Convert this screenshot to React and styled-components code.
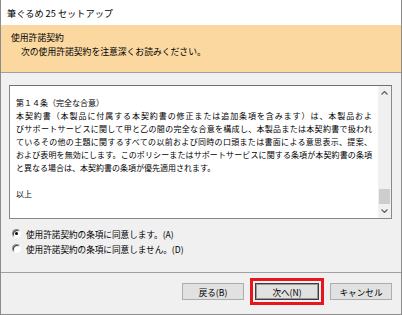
import React from 'react'
import styled, { createGlobalStyle } from 'styled-components'

const Global = createGlobalStyle`
  html, body { margin: 0; padding: 0; background: #fff; }
  body { font-family: "Noto Sans CJK JP", "Noto Sans", sans-serif; color: #000; }
`

const lines = [
  { text: '第１４条（完全な合意）' },
  { text: '本契約書（本製品に付属する本契約書の修正または追加条項を含みます）は、本製品およ', justify: true },
  { text: 'びサポートサービスに関して甲と乙の間の完全な合意を構成し、本製品または本契約書で扱われ', justify: true },
  { text: 'ているその他の主題に関するすべての以前および同時の口頭または書面による意思表示、提案、', justify: true },
  { text: 'および表明を無効にします。このポリシーまたはサポートサービスに関する条項が本契約書の条項', justify: true },
  { text: 'と異なる場合は、本契約書の条項が優先適用されます。' },
  { text: '' },
  { text: '以上' },
]

const App = () => {
  return (
    <Window>
      <Global />
      <TitleBar>筆ぐるめ 25 セットアップ</TitleBar>
      <Header>
        <HeaderTitle>使用許諾契約</HeaderTitle>
        <HeaderSub>次の使用許諾契約を注意深くお読みください。</HeaderSub>
      </Header>
      <Body>
        <TextBox>
          <Content>
            {lines.map((l, i) => (
              <Line key={i} $justify={l.justify}>{l.text || '\u00a0'}</Line>
            ))}
          </Content>
          <Scrollbar>
            <Arrow>
              <svg width="7" height="4" viewBox="0 0 7 4"><path d="M0.5 3.5 L3.5 0.5 L6.5 3.5" fill="none" stroke="#606060" strokeWidth="1.2" /></svg>
            </Arrow>
            <Track>
              <Thumb />
            </Track>
            <Arrow>
              <svg width="7" height="4" viewBox="0 0 7 4"><path d="M0.5 0.5 L3.5 3.5 L6.5 0.5" fill="none" stroke="#606060" strokeWidth="1.2" /></svg>
            </Arrow>
          </Scrollbar>
        </TextBox>
        <Options>
          <Option>
            <Radio $checked />
            使用許諾契約の条項に同意します。(A)
          </Option>
          <Option>
            <Radio />
            使用許諾契約の条項に同意しません。(D)
          </Option>
        </Options>
      </Body>
      <Footer>
        <Button>戻る(B)</Button>
        <Button $primary $marked>次へ(N)</Button>
        <Button>キャンセル</Button>
      </Footer>
    </Window>
  )
}

export default App

const Window = styled.div`
  width: 402px;
  height: 315px;
  box-sizing: border-box;
  border: 1px solid #8c8c8c;
  border-top: none;
  display: flex;
  flex-direction: column;
  background: #f0f0f0;
  overflow: hidden;
`

const TitleBar = styled.div`
  height: 25px;
  background: #fff;
  display: flex;
  align-items: center;
  padding-left: 6px;
  font-size: 9.2px;
`

const Header = styled.div`
  height: 48px;
  box-sizing: border-box;
  background: #fad8a0;
  border-bottom: 1px solid #a0a0a0;
  padding: 6px 0 0 10px;
  font-size: 8.8px;
  line-height: 14px;
`

const HeaderTitle = styled.div``

const HeaderSub = styled.div`
  padding-left: 10px;
`

const Body = styled.div`
  flex: 1;
  padding: 12px 9px 0 8px;
  border-bottom: 1px solid #a0a0a0;
`

const TextBox = styled.div`
  height: 134px;
  box-sizing: border-box;
  border: 1px solid #828790;
  border-top-color: #6f6f6f;
  background: #fff;
  display: flex;
`

const Content = styled.div`
  flex: 1;
  padding: 10px 0 0 6px;
  overflow: hidden;
  font-size: 8px;
  line-height: 13px;
`

const Line = styled.div`
  width: 356px;
  white-space: nowrap;
  text-align: left;
  text-align-last: ${p => (p.$justify ? 'justify' : 'left')};
`

const Scrollbar = styled.div`
  width: 13px;
  background: #f0f0f0;
  display: flex;
  flex-direction: column;
`

const Arrow = styled.div`
  height: 14px;
  display: flex;
  align-items: center;
  justify-content: center;
`

const Track = styled.div`
  flex: 1;
  display: flex;
  flex-direction: column;
  justify-content: flex-end;
  padding: 0 1px;
`

const Thumb = styled.div`
  height: 15px;
  background: #cdcdcd;
`

const Options = styled.div`
  padding: 7px 0 0 3px;
  font-size: 8.6px;
`

const Option = styled.div`
  height: 15px;
  display: flex;
  align-items: center;
  gap: 5px;
`

const Radio = styled.span`
  width: 9px;
  height: 9px;
  box-sizing: border-box;
  border-radius: 50%;
  border: 1px solid;
  border-color: #8a8a8a #ffffff #ffffff #8a8a8a;
  background: #fff;
  box-shadow: inset 1px 1px 0 #404040;
  display: flex;
  align-items: center;
  justify-content: center;
  &::after {
    content: '';
    width: 3px;
    height: 3px;
    border-radius: 50%;
    background: #000;
    display: ${p => (p.$checked ? 'block' : 'none')};
  }
`

const Footer = styled.div`
  height: 41px;
  display: flex;
  align-items: flex-start;
  justify-content: flex-end;
  gap: 11px;
  padding: 10px 9px 0 0;
  box-sizing: border-box;
`

const Button = styled.button`
  width: ${p => (p.$primary ? 64 : 62)}px;
  height: 17px;
  padding: 0;
  font-family: inherit;
  font-size: 8.6px;
  color: #000;
  background: #e1e1e1;
  border: 1px solid ${p => (p.$primary ? '#3c3c3c' : '#adadad')};
  box-shadow: ${p => (p.$primary ? 'inset 0 0 0 1px #9a9a9a' : 'none')};
  outline: ${p => (p.$marked ? '3px solid #e8141e' : 'none')};
  outline-offset: 2px;
`
